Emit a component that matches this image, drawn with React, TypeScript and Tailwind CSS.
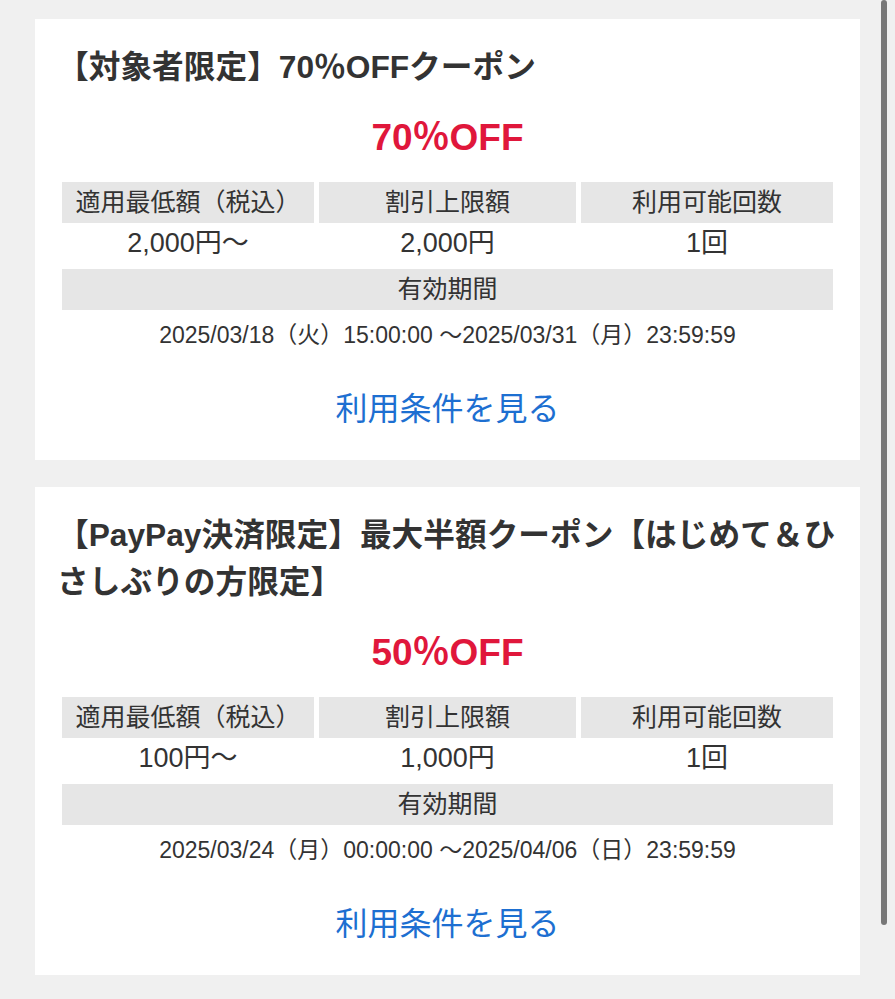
type Coupon = {
  title: string;
  discount: string;
  minimum: string;
  cap: string;
  uses: string;
  period: string;
};

const coupons: Coupon[] = [
  {
    title: '【対象者限定】70％OFFクーポン',
    discount: '70％OFF',
    minimum: '2,000円〜',
    cap: '2,000円',
    uses: '1回',
    period: '2025/03/18（火）15:00:00 〜2025/03/31（月）23:59:59',
  },
  {
    title: '【PayPay決済限定】最大半額クーポン【はじめて＆ひさしぶりの方限定】',
    discount: '50％OFF',
    minimum: '100円〜',
    cap: '1,000円',
    uses: '1回',
    period: '2025/03/24（月）00:00:00 〜2025/04/06（日）23:59:59',
  },
];

const font = { fontFamily: '"Liberation Sans", "Noto Sans CJK JP", sans-serif' };

const CouponCard = ({ c }: { c: Coupon }) => (
  <div className="bg-white px-[22px] pt-[25px] pb-[31px] text-[#333]">
    {/* Title */}
    <h2 className="mr-[-12px] text-[31.7px] font-bold leading-[47px]">{c.title}</h2>

    {/* Discount */}
    <div className="mt-[24px] text-center text-[37px] font-bold leading-[46px] text-[#e0173b]">
      {c.discount}
    </div>

    {/* Conditions table */}
    <div className="mx-[5px] mt-[21px]">
      <div className="grid grid-cols-[252fr_257fr_252fr] gap-x-[5px]">
        {['適用最低額（税込）', '割引上限額', '利用可能回数'].map((h) => (
          <div key={h} className="flex h-[41px] items-center justify-center bg-[#e6e6e6] text-[25px]">
            {h}
          </div>
        ))}
        {[c.minimum, c.cap, c.uses].map((v, i) => (
          <div key={i} className="flex h-[41px] items-center justify-center text-[27px]">
            {v}
          </div>
        ))}
      </div>
      <div className="mt-[5px] flex h-[41px] items-center justify-center bg-[#e6e6e6] text-[25px]">
        有効期間
      </div>
      <div className="flex h-[51px] items-center justify-center whitespace-nowrap text-[23px]">
        {c.period}
      </div>
    </div>

    {/* Link */}
    <div className="mt-[28px] text-center text-[32px] leading-[40px] text-[#1d6fd1]">利用条件を見る</div>
  </div>
);

export default function App() {
  return (
    <div className="relative h-[999px] overflow-hidden bg-[#f0f0f0]" style={font}>
      <div className="mx-[35px] flex flex-col gap-[27px] pt-[19px]">
        {coupons.map((c, i) => (
          <CouponCard key={i} c={c} />
        ))}
      </div>

      {/* overlay scrollbar */}
      <div className="absolute left-[881px] top-0 h-[925px] w-[6px] rounded-full bg-[#777]" />
    </div>
  );
}
